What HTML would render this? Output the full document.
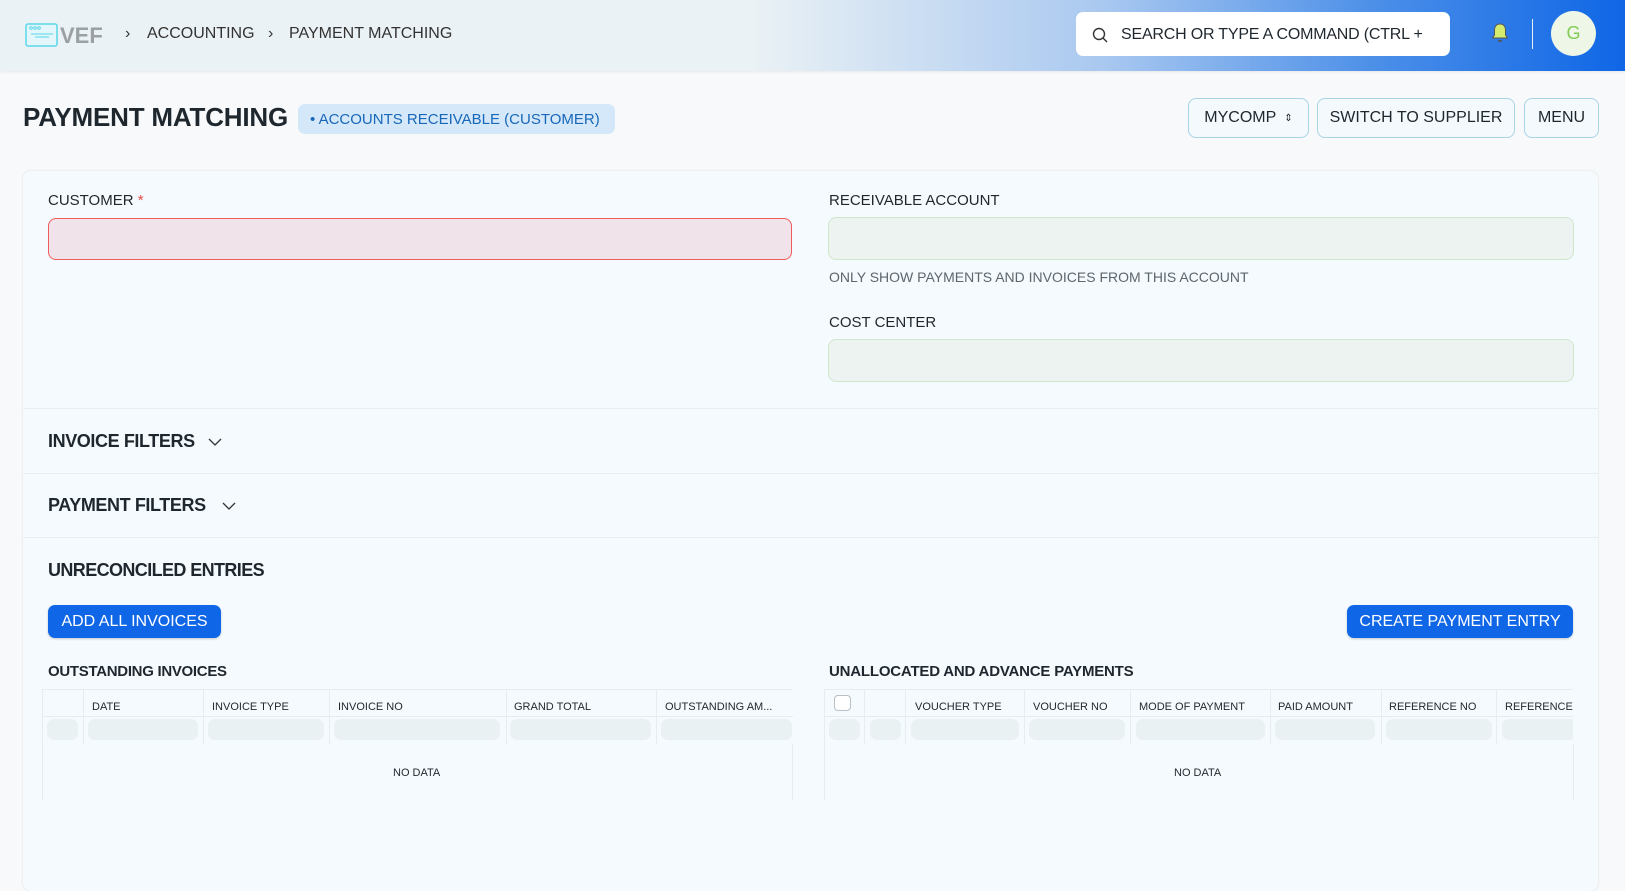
<!DOCTYPE html>
<html><head><meta charset="utf-8"><style>
*{box-sizing:border-box;margin:0;padding:0}
body{width:1625px;height:852px;overflow:hidden;background:#f7f9fa;font-family:"Liberation Sans",sans-serif;color:#1f272e;position:relative}
.a{position:absolute;white-space:nowrap}
.nav{position:absolute;left:0;top:0;width:1625px;height:71px;background:linear-gradient(90deg,#ebf2f5 0%,#ebf2f5 46%,#a9c8f0 68%,#4a8ee8 85%,#0f66e6 100%);box-shadow:0 1px 3px rgba(0,0,0,.08)}
.card{position:absolute;left:23px;top:171px;width:1575px;height:720px;background:#f5fafe;border-radius:8px;box-shadow:0 0 2px rgba(0,0,0,.12)}
.lbl{font-size:15px;color:#1f272e}
.inp{position:absolute;border-radius:8px}
.hr{position:absolute;left:23px;width:1575px;height:1px;background:#e8eef2}
.h{font-size:18px;font-weight:bold;letter-spacing:-.4px}
.btn{position:absolute;border:1px solid #a9d4e6;border-radius:8px;background:#f3f9fd;font-size:16px;display:flex;align-items:center;justify-content:center}
.pb{position:absolute;background:#0f66e6;color:#fff;border-radius:7px;font-size:16px;display:flex;align-items:center;justify-content:center;box-shadow:0 1px 2px rgba(0,0,0,.2)}
.th{position:absolute;font-size:11px;color:#1f272e;top:701px}
.vl{position:absolute;width:1px;background:#e6edf1}
.sk{position:absolute;height:21px;background:#eaf1f3;border-radius:7px;top:719px}
</style></head><body>
<div class="nav"></div>
<svg class="a" style="left:25px;top:23px" width="34" height="24"><rect x="1" y="1" width="31" height="22" rx="2" fill="#e3f6fb" stroke="#5ad8e8" stroke-width="1.5"/><circle cx="6" cy="5" r="1.3" fill="none" stroke="#5ad8e8"/><circle cx="10" cy="5" r="1.3" fill="none" stroke="#5ad8e8"/><circle cx="14" cy="5" r="1.3" fill="none" stroke="#5ad8e8"/><line x1="6" y1="11" x2="28" y2="11" stroke="#5ad8e8"/><line x1="10" y1="14" x2="24" y2="14" stroke="#5ad8e8"/></svg>
<div class="a" style="left:60px;top:23px;font-size:22px;color:#9aa0a4;font-weight:bold;letter-spacing:0px">VEF</div>
<div class="a" style="left:125px;top:25px;font-size:16px;color:#333">›</div>
<div class="a" style="left:147px;top:25px;font-size:16px;color:#333">ACCOUNTING</div>
<div class="a" style="left:268px;top:25px;font-size:16px;color:#333">›</div>
<div class="a" style="left:289px;top:25px;font-size:16px;color:#333">PAYMENT MATCHING</div>
<div class="a" style="left:1076px;top:12px;width:374px;height:44px;background:#fff;border-radius:7px"></div>
<svg class="a" style="left:1092px;top:27px" width="16" height="16"><circle cx="7" cy="7" r="5.5" fill="none" stroke="#333" stroke-width="1.4"/><line x1="11" y1="11" x2="15" y2="15" stroke="#333" stroke-width="1.4"/></svg>
<div class="a" style="left:1121px;top:26px;font-size:16px;color:#1f272e;letter-spacing:-.2px">SEARCH OR TYPE A COMMAND (CTRL +</div>
<svg class="a" style="left:1490px;top:22px" width="20" height="22"><path d="M10 2c-4 0-5.5 3-5.5 6v5L2.5 16h15l-2-3V8c0-3-1.5-6-5.5-6z" fill="#d4ec6e" stroke="#555" stroke-width="1"/><path d="M8 18a2 2 0 0 0 4 0" fill="#555"/></svg>
<div class="a" style="left:1532px;top:19px;width:1px;height:30px;background:#e8eef6"></div>
<div class="a" style="left:1551px;top:11px;width:45px;height:45px;border-radius:50%;background:#eef7e7;color:#7fcb53;font-size:18px;display:flex;align-items:center;justify-content:center">G</div>

<div class="a" style="left:23px;top:102px;font-size:26px;font-weight:bold;letter-spacing:-.2px">PAYMENT MATCHING</div>
<div class="a" style="left:298px;top:104px;width:317px;height:30px;background:#d4e8fa;border-radius:7px;color:#1867b8;font-size:15px;line-height:31px;padding-left:12px">• ACCOUNTS RECEIVABLE (CUSTOMER)</div>
<div class="btn" style="left:1188px;top:98px;width:121px;height:40px">MYCOMP <span style="font-size:10px;margin-left:8px">⇕</span></div>
<div class="btn" style="left:1317px;top:98px;width:198px;height:40px">SWITCH TO SUPPLIER</div>
<div class="btn" style="left:1524px;top:98px;width:75px;height:40px">MENU</div>

<div class="card"></div>
<div class="a lbl" style="left:48px;top:192px">CUSTOMER <span style="color:#e24c4c">*</span></div>
<div class="inp" style="left:48px;top:218px;width:744px;height:42px;background:#f0e3e9;border:1px solid #ef5a5a"></div>
<div class="a lbl" style="left:829px;top:192px">RECEIVABLE ACCOUNT</div>
<div class="inp" style="left:828px;top:217px;width:746px;height:43px;background:#ecf3f0;border:1px solid #cfe6cd"></div>
<div class="a" style="left:829px;top:269px;font-size:14px;color:#5d666d">ONLY SHOW PAYMENTS AND INVOICES FROM THIS ACCOUNT</div>
<div class="a lbl" style="left:829px;top:314px">COST CENTER</div>
<div class="inp" style="left:828px;top:339px;width:746px;height:43px;background:#ecf3f0;border:1px solid #cfe6cd"></div>
<div class="hr" style="top:408px"></div>
<div class="a h" style="left:48px;top:431px">INVOICE FILTERS</div>
<svg class="a" style="left:208px;top:437px" width="14" height="10"><path d="M1 2l6 6 6-6" fill="none" stroke="#333" stroke-width="1.3"/></svg>
<div class="hr" style="top:473px"></div>
<div class="a h" style="left:48px;top:495px">PAYMENT FILTERS</div>
<svg class="a" style="left:222px;top:501px" width="14" height="10"><path d="M1 2l6 6 6-6" fill="none" stroke="#333" stroke-width="1.3"/></svg>
<div class="hr" style="top:537px"></div>
<div class="a h" style="left:48px;top:560px;letter-spacing:-.6px">UNRECONCILED ENTRIES</div>
<div class="pb" style="left:48px;top:605px;width:173px;height:33px">ADD ALL INVOICES</div>
<div class="pb" style="left:1347px;top:605px;width:226px;height:33px">CREATE PAYMENT ENTRY</div>
<div class="a" style="left:48px;top:663px;font-size:15px;font-weight:bold;letter-spacing:-.3px">OUTSTANDING INVOICES</div>
<div class="a" style="left:829px;top:663px;font-size:15px;font-weight:bold;letter-spacing:-.2px">UNALLOCATED AND ADVANCE PAYMENTS</div>

<div class="a" style="left:42px;top:689px;width:751px;height:111px;border-top:1px solid #e6edf1;border-left:1px solid #e6edf1"></div>
<div class="a" style="left:42px;top:716px;width:751px;height:1px;background:#e6edf1"></div>
<div class="vl" style="left:83px;top:689px;height:55px"></div><div class="vl" style="left:203px;top:689px;height:55px"></div><div class="vl" style="left:329px;top:689px;height:55px"></div><div class="vl" style="left:506px;top:689px;height:55px"></div><div class="vl" style="left:656px;top:689px;height:55px"></div><div class="vl" style="left:792px;top:744px;height:56px"></div>
<div class="th" style="left:92px">DATE</div><div class="th" style="left:212px">INVOICE TYPE</div><div class="th" style="left:338px">INVOICE NO</div><div class="th" style="left:514px">GRAND TOTAL</div><div class="th" style="left:665px">OUTSTANDING AM...</div>
<div class="sk" style="left:47px;width:31px"></div><div class="sk" style="left:88px;width:110px"></div><div class="sk" style="left:208px;width:116px"></div><div class="sk" style="left:334px;width:166px"></div><div class="sk" style="left:510px;width:141px"></div><div class="sk" style="left:661px;width:131px"></div>
<div class="a" style="left:393px;top:767px;font-size:11px">NO DATA</div>

<div class="a" style="left:824px;top:689px;width:749px;height:111px;border-top:1px solid #e6edf1;border-left:1px solid #e6edf1"></div>
<div class="a" style="left:824px;top:716px;width:749px;height:1px;background:#e6edf1"></div>
<div class="vl" style="left:864px;top:689px;height:55px"></div><div class="vl" style="left:905px;top:689px;height:55px"></div><div class="vl" style="left:1024px;top:689px;height:55px"></div><div class="vl" style="left:1130px;top:689px;height:55px"></div><div class="vl" style="left:1270px;top:689px;height:55px"></div><div class="vl" style="left:1381px;top:689px;height:55px"></div><div class="vl" style="left:1496px;top:689px;height:55px"></div><div class="vl" style="left:1573px;top:744px;height:56px"></div>
<div class="a" style="left:834px;top:695px;width:17px;height:16px;border:1px solid #b8c0c5;border-radius:4px;background:#fff"></div>
<div class="th" style="left:915px">VOUCHER TYPE</div><div class="th" style="left:1033px">VOUCHER NO</div><div class="th" style="left:1139px">MODE OF PAYMENT</div><div class="th" style="left:1278px">PAID AMOUNT</div><div class="th" style="left:1389px">REFERENCE NO</div><div class="th" style="left:1505px">REFERENCE</div>
<div class="sk" style="left:829px;width:31px"></div><div class="sk" style="left:870px;width:31px"></div><div class="sk" style="left:911px;width:108px"></div><div class="sk" style="left:1029px;width:96px"></div><div class="sk" style="left:1136px;width:129px"></div><div class="sk" style="left:1275px;width:100px"></div><div class="sk" style="left:1386px;width:106px"></div><div class="sk" style="left:1502px;width:71px;border-radius:7px 0 0 7px"></div>
<div class="a" style="left:1174px;top:767px;font-size:11px">NO DATA</div>
</body></html>
